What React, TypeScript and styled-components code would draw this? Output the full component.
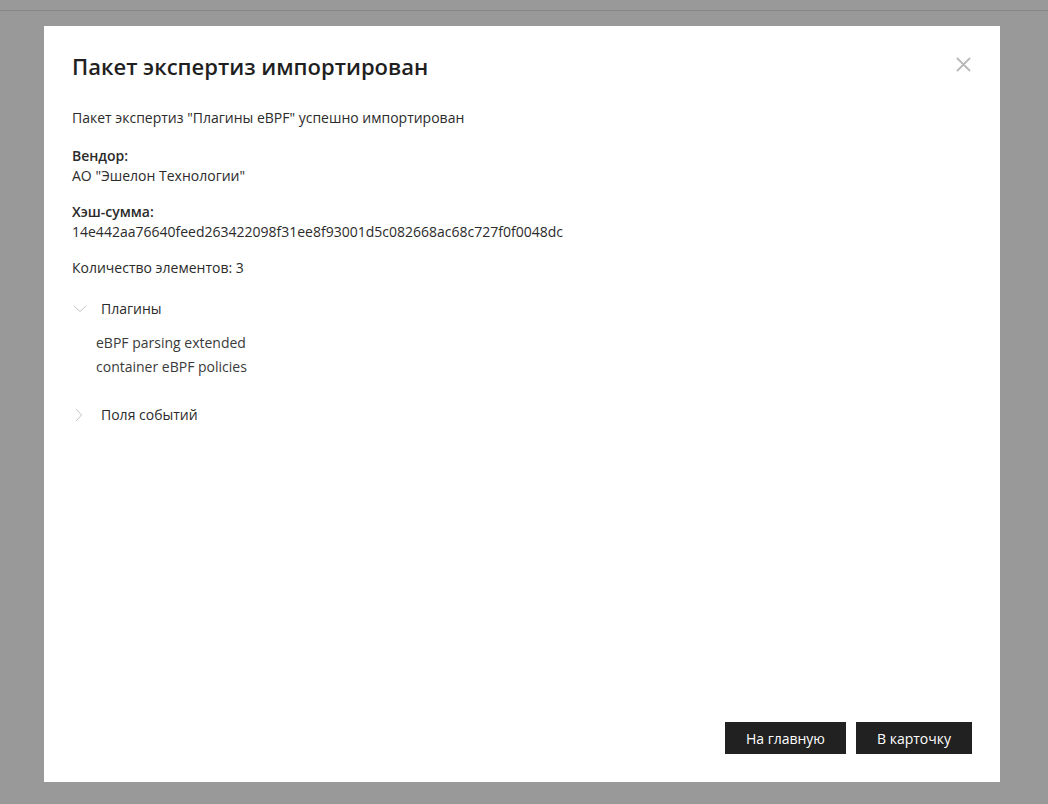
import React, { useState } from "react";
import styled, { createGlobalStyle } from "styled-components";

const Global = createGlobalStyle`
  html, body { margin: 0; padding: 0; }
  body {
    font-family: "Open Sans", "Noto Sans", sans-serif;
    background: #999999;
    width: 1048px;
    height: 804px;
    overflow: hidden;
  }
  * { box-sizing: border-box; }
`;

const Page = styled.div`
  width: 1048px;
  height: 804px;
  display: flex;
  flex-direction: column;
  background: #999999;
`;

const TopBar = styled.div`
  height: 11px;
  border-bottom: 1px solid #878787;
  flex-shrink: 0;
`;

const Overlay = styled.div`
  flex: 1;
  padding: 15px 48px 22px 44px;
  display: flex;
`;

const Dialog = styled.div`
  position: relative;
  flex: 1;
  background: #ffffff;
  padding: 28px 28px 28px 28px;
  display: flex;
  flex-direction: column;
`;

const Title = styled.h2`
  margin: 0;
  font-size: 22px;
  line-height: 24px;
  font-weight: 600;
  color: #1f1f1f;
`;

const CloseButton = styled.button`
  position: absolute;
  top: 28px;
  right: 27px;
  width: 20px;
  height: 20px;
  padding: 0;
  border: none;
  background: transparent;
  display: flex;
  align-items: center;
  justify-content: center;
  cursor: pointer;
`;

const Body = styled.div`
  flex: 1;
  margin-top: 30px;
  display: flex;
  flex-direction: column;
  color: #2b2b2b;
  font-size: 14px;
  line-height: 20px;
`;

const Paragraph = styled.div<{ $gap?: number }>`
  margin-bottom: ${(p) => p.$gap ?? 16}px;
`;

const Label = styled.div`
  font-weight: 600;
`;

const AccordionHeader = styled.button`
  display: flex;
  align-items: center;
  padding: 0;
  border: none;
  background: transparent;
  font-family: inherit;
  font-size: 14px;
  line-height: 22px;
  color: #2b2b2b;
  cursor: pointer;
  height: 22px;
`;

const ChevronBox = styled.span`
  width: 29px;
  display: flex;
  align-items: center;
  justify-content: flex-start;
`;

const ItemList = styled.div`
  padding: 11px 0 25px 24px;
  display: flex;
  flex-direction: column;
  color: #3a3a3a;
  line-height: 24px;
`;

const Section = styled.div<{ $open: boolean }>`
  margin-bottom: ${(p) => (p.$open ? 0 : 12)}px;
`;

const Footer = styled.div`
  display: flex;
  justify-content: flex-end;
  gap: 10px;
`;

const DarkButton = styled.button`
  height: 32px;
  padding: 0 21px;
  border: none;
  background: #212121;
  color: #ffffff;
  font-family: inherit;
  font-size: 14px;
  cursor: pointer;
`;

const ChevronDown = () => (
  <svg width="14" height="8" viewBox="0 0 14 8" style={{ marginLeft: 1 }}>
    <path d="M1 1 L7 6.5 L13 1" fill="none" stroke="#c4c4c4" strokeWidth="1" />
  </svg>
);

const ChevronRight = () => (
  <svg width="8" height="14" viewBox="0 0 8 14" style={{ marginLeft: 3 }}>
    <path d="M1 1 L6.5 7 L1 13" fill="none" stroke="#c4c4c4" strokeWidth="1" />
  </svg>
);

const CloseIcon = () => (
  <svg width="15" height="15" viewBox="0 0 15 15">
    <path d="M1 1 L14 14 M14 1 L1 14" stroke="#b9b9b9" strokeWidth="1.8" />
  </svg>
);

function Accordion({ title, items, defaultOpen }: { title: string; items: string[]; defaultOpen?: boolean }) {
  const [open, setOpen] = useState(!!defaultOpen);
  return (
    <Section $open={open}>
      <AccordionHeader onClick={() => setOpen(!open)}>
        <ChevronBox>{open ? <ChevronDown /> : <ChevronRight />}</ChevronBox>
        {title}
      </AccordionHeader>
      {open && (
        <ItemList>
          {items.map((it) => (
            <div key={it}>{it}</div>
          ))}
        </ItemList>
      )}
    </Section>
  );
}

export default function App() {
  return (
    <Page>
      <Global />
      <TopBar />
      <Overlay>
        <Dialog>
          <Title>Пакет экспертиз импортирован</Title>
          <CloseButton aria-label="Закрыть">
            <CloseIcon />
          </CloseButton>
          <Body>
            <Paragraph $gap={18}>Пакет экспертиз "Плагины eBPF" успешно импортирован</Paragraph>
            <Paragraph>
              <Label>Вендор:</Label>
              <div>АО "Эшелон Технологии"</div>
            </Paragraph>
            <Paragraph>
              <Label>Хэш-сумма:</Label>
              <div>14e442aa76640feed263422098f31ee8f93001d5c082668ac68c727f0f0048dc</div>
            </Paragraph>
            <Paragraph $gap={20}>Количество элементов: 3</Paragraph>
            <Accordion
              title="Плагины"
              items={["eBPF parsing extended", "container eBPF policies"]}
              defaultOpen
            />
            <Accordion title="Поля событий" items={[]} />
          </Body>
          <Footer>
            <DarkButton>На главную</DarkButton>
            <DarkButton>В карточку</DarkButton>
          </Footer>
        </Dialog>
      </Overlay>
    </Page>
  );
}
